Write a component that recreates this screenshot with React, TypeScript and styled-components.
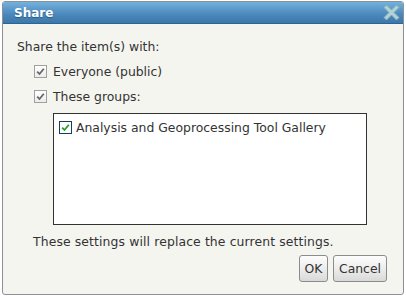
import styled, { createGlobalStyle } from "styled-components";

const GlobalStyle = createGlobalStyle`
  body {
    margin: 0;
    background: #ffffff;
    font-family: "DejaVu Sans", Verdana, sans-serif;
  }
`;

const Dialog = styled.div`
  box-sizing: border-box;
  width: 402px;
  height: 294px;
  margin: 1px 0 0 2px;
  border: 1px solid #8b9197;
  border-radius: 3px;
  background: #f5f5f0;
  overflow: hidden;
  display: flex;
  flex-direction: column;
`;

const TitleBar = styled.div`
  height: 21px;
  padding: 0 3px 0 11px;
  display: flex;
  align-items: center;
  justify-content: space-between;
  background: linear-gradient(#74b2dd, #4a87bb 60%, #3d78a9);
  border-bottom: 1px solid #2f6390;
`;

const Title = styled.span`
  font-size: 12px;
  font-weight: bold;
  color: #ffffff;
  text-shadow: 0 1px 1px rgba(20, 60, 100, 0.6);
`;

const Body = styled.div`
  flex: 1;
  padding: 13px 16px 0 14px;
  display: flex;
  flex-direction: column;
  color: #333333;
  font-size: 12.4px;
`;

const Label = styled.div<{ $indent?: number }>`
  line-height: 20px;
  padding-left: ${(p) => p.$indent ?? 0}px;
`;

const OptionRow = styled.label`
  height: 25px;
  display: flex;
  align-items: center;
  gap: 6px;
  padding-left: 17px;
  &:first-of-type {
    margin-top: 2px;
  }
`;

const Box = styled.span<{ $accent?: boolean }>`
  box-sizing: border-box;
  width: 13px;
  height: 13px;
  flex: none;
  display: flex;
  align-items: center;
  justify-content: center;
  border: 1px solid ${(p) => (p.$accent ? "#1c3c5e" : "#a0a0a0")};
  background: ${(p) =>
    p.$accent ? "#ffffff" : "linear-gradient(#ffffff, #ececec)"};
`;

const GroupList = styled.div`
  box-sizing: border-box;
  width: 314px;
  height: 112px;
  margin: 4px 0 0 36px;
  border: 1px solid #333333;
  background: #ffffff;
  padding: 5px 5px;
`;

const GroupItem = styled.label`
  display: flex;
  align-items: center;
  gap: 4px;
  height: 17px;
  line-height: 17px;
`;

const Footer = styled.div`
  margin-top: 7px;
  letter-spacing: 0.12px;
`;

const Buttons = styled.div`
  display: flex;
  justify-content: flex-end;
  gap: 5px;
  margin-top: 3px;
`;

const Button = styled.button<{ $width: number }>`
  box-sizing: border-box;
  width: ${(p) => p.$width}px;
  height: 27px;
  padding: 0;
  border: 1px solid #8c8c8c;
  border-radius: 3px;
  background: linear-gradient(#fdfdfd, #e9e9e9 60%, #d9d9d9);
  font-family: "DejaVu Sans", Verdana, sans-serif;
  font-size: 12.4px;
  color: #333333;
`;

function Check({ color }: { color: string }) {
  return (
    <svg width="9" height="9" viewBox="0 0 9 9">
      <path
        d="M1.2 4.6 L3.5 7 L7.8 1.8"
        fill="none"
        stroke={color}
        strokeWidth="1.8"
      />
    </svg>
  );
}

function CloseIcon() {
  return (
    <svg width="17" height="17" viewBox="0 0 17 17">
      <path
        d="M3.5 1 L8.5 6 L13.5 1 L16 3.5 L11 8.5 L16 13.5 L13.5 16 L8.5 11 L3.5 16 L1 13.5 L6 8.5 L1 3.5 Z"
        fill="#b2d3d6"
        stroke="#86adba"
        strokeWidth="1"
        strokeLinejoin="round"
      />
    </svg>
  );
}

export default function App() {
  return (
    <>
      <GlobalStyle />
      <Dialog>
        <TitleBar>
          <Title>Share</Title>
          <CloseIcon />
        </TitleBar>
        <Body>
          <Label>Share the item(s) with:</Label>
          <OptionRow>
            <Box>
              <Check color="#666666" />
            </Box>
            Everyone (public)
          </OptionRow>
          <OptionRow>
            <Box>
              <Check color="#666666" />
            </Box>
            These groups:
          </OptionRow>
          <GroupList>
            <GroupItem>
              <Box $accent>
                <Check color="#22a12a" />
              </Box>
              Analysis and Geoprocessing Tool Gallery
            </GroupItem>
          </GroupList>
          <Footer>
            <Label $indent={16}>These settings will replace the current settings.</Label>
          </Footer>
          <Buttons>
            <Button $width={29}>OK</Button>
            <Button $width={54}>Cancel</Button>
          </Buttons>
        </Body>
      </Dialog>
    </>
  );
}
